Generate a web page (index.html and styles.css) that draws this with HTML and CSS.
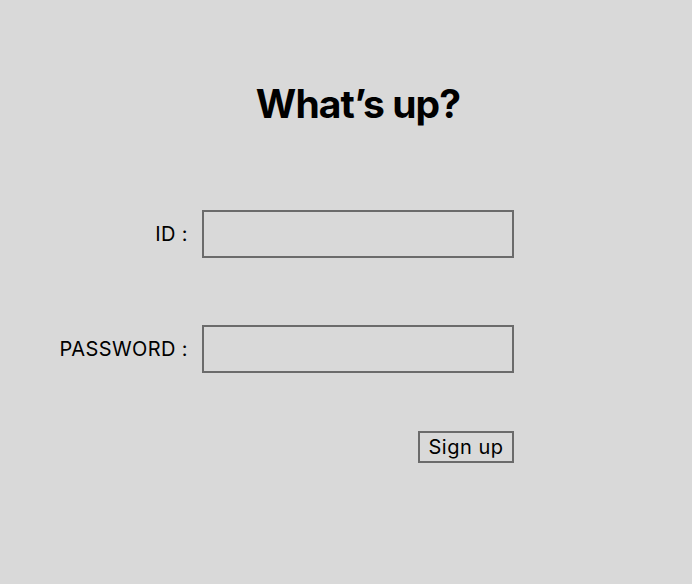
FILE: index.html
```html
<!DOCTYPE html>
<html lang="en">
<head>
<meta charset="utf-8">
<title>What's up?</title>
<link rel="stylesheet" href="styles.css">
</head>
<body>
<main class="page">
  <h1 class="title">What’s up?</h1>
  <form class="form">
    <div class="row">
      <label class="label" for="id">ID :</label>
      <input class="field" id="id" type="text">
    </div>
    <div class="row row-pw">
      <label class="label" for="pw">PASSWORD :</label>
      <input class="field" id="pw" type="password">
    </div>
    <div class="row row-btn">
      <button class="btn" type="button">Sign up</button>
    </div>
  </form>
</main>
</body>
</html>
```
FILE: styles.css
```css
html, body {
  margin: 0;
  padding: 0;
  background: #d9d9d9;
}
body {
  width: 692px;
  height: 584px;
  font-family: Inter, "Noto Sans", sans-serif;
  color: #000;
}
.page {
  padding-top: 80px;
}
.title {
  width: 312px;
  margin: 0 0 82px 202px;
  text-align: center;
  font-size: 39px;
  line-height: 48px;
  font-weight: 700;
  letter-spacing: -0.9px;
}
.form {
  display: flex;
  flex-direction: column;
}
.row {
  display: grid;
  grid-template-columns: 188px 312px;
  column-gap: 14px;
  align-items: center;
}
.row-pw {
  margin-top: 67px;
}
.row-btn {
  margin-top: 58px;
}
.label {
  text-align: right;
  font-size: 20px;
  line-height: 24px;
  letter-spacing: 0.4px;
}
.field {
  box-sizing: border-box;
  height: 48px;
  margin: 0;
  border: 2px solid #6b6b6b;
  background: transparent;
  font: inherit;
}
.btn {
  grid-column: 2;
  justify-self: end;
  box-sizing: border-box;
  width: 96px;
  height: 32px;
  padding: 0;
  border: 2px solid #6b6b6b;
  background: transparent;
  font-family: inherit;
  font-size: 20px;
  line-height: 24px;
  letter-spacing: 0.5px;
  color: #000;
}
```
